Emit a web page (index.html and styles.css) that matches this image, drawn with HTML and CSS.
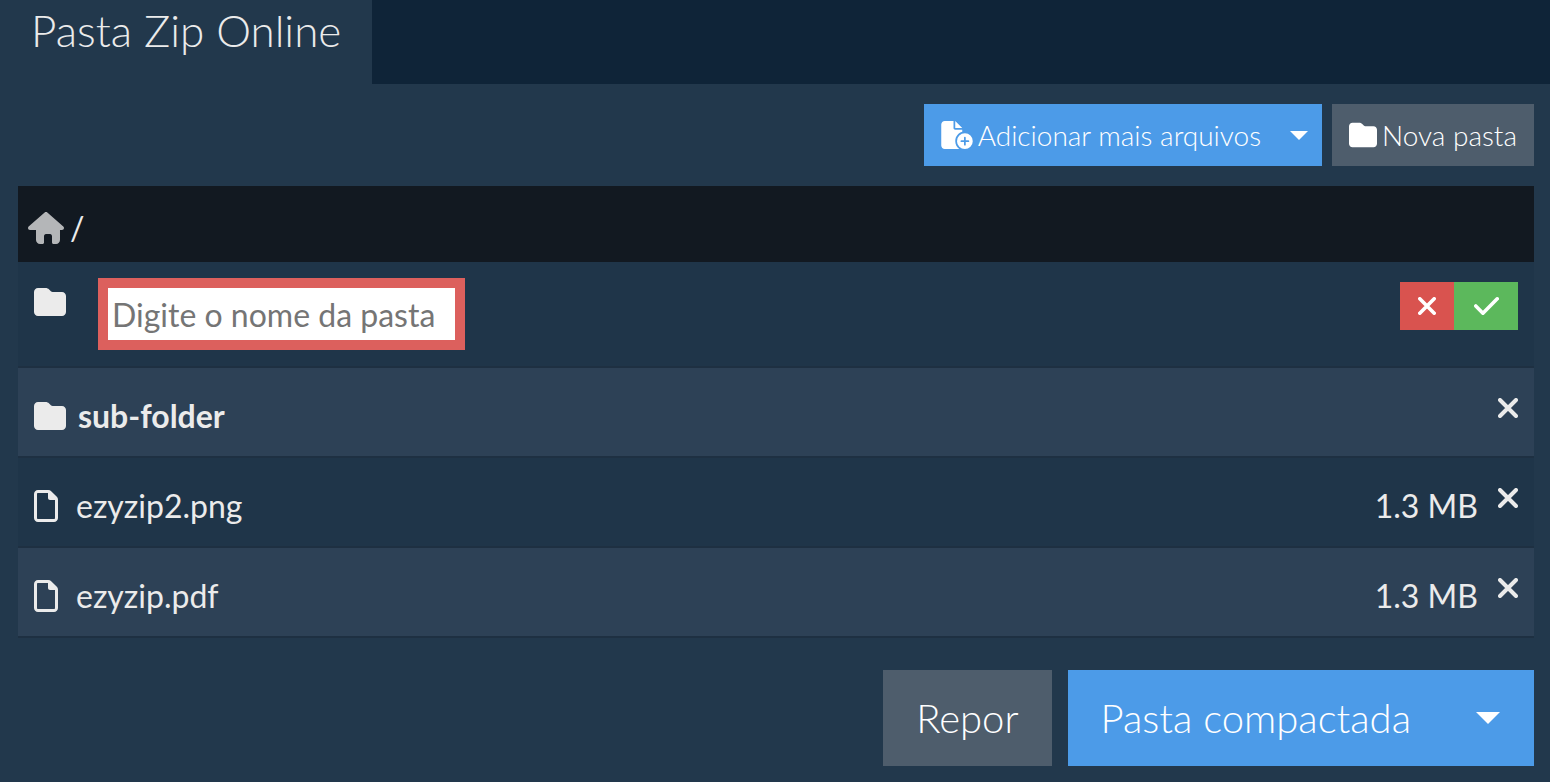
FILE: index.html
```html
<!DOCTYPE html>
<html lang="pt-BR">
  <head>
    <meta charset="UTF-8" />
    <meta name="viewport" content="width=device-width, initial-scale=1.0" />
    <title>Pasta Zip Online</title>
    <link rel="stylesheet" href="styles.css">
  </head>
  <body>
    <!-- Ícones compartilhados -->
    <svg class="sprite" aria-hidden="true">
      <symbol id="icon-folder" viewBox="0 0 512 512">
        <path d="M64 480H448c35.300 0 64-28.700 64-64V160c0-35.300-28.700-64-64-64H298c-11 0-20-4-28-12L242 56c-15-15-35-24-57-24H64C28.700 32 0 60.700 0 96V416c0 35.300 28.700 64 64 64z" />
      </symbol>
      <symbol id="icon-file" viewBox="0 0 384 512">
        <path d="M336 448V160H256c-17.700 0-32-14.300-32-32V48H64c-8.800 0-16 7.200-16 16V448c0 8.800 7.200 16 16 16H320c8.800 0 16-7.200 16-16zM64 0H229.500c17 0 33.300 6.700 45.300 18.700l90.500 90.500c12 12 18.700 28.300 18.700 45.300V448c0 35.300-28.700 64-64 64H64c-35.300 0-64-28.700-64-64V64C0 28.700 28.700 0 64 0z" />
      </symbol>
      <symbol id="icon-close" viewBox="0 0 320 320">
        <path d="M32 32L288 288M288 32L32 288" fill="none" stroke="currentColor" stroke-width="64" stroke-linecap="round" />
      </symbol>
      <symbol id="icon-check" viewBox="0 0 448 320">
        <path d="M32 160L160 288L416 32" fill="none" stroke="currentColor" stroke-width="64" stroke-linecap="round" stroke-linejoin="round" />
      </symbol>
    </svg>

    <div class="tabs">
      <h1 class="tab">Pasta Zip Online</h1>
    </div>

    <div class="container">
      <div class="toolbar">
        <div class="btn-group">
          <button type="button" class="btn btn-primary">
            <svg class="icon-add" viewBox="0 0 576 512" aria-hidden="true">
              <path d="M0 64C0 28.700 28.700 0 64 0H224V128c0 17.700 14.300 32 32 32H384v38.600C310.100 219.500 256 287.400 256 368c0 59.100 29.100 111.300 73.700 143.300c-3.200 .5-6.400 .7-9.700 .7H64c-35.300 0-64-28.700-64-64V64zM384 128H256V0L384 128z" />
              <path fill-rule="evenodd" d="M432 224a144 144 0 1 1 0 288a144 144 0 1 1 0-288zM448 304a16 16 0 0 0-32 0v48H368a16 16 0 0 0 0 32h48v48a16 16 0 0 0 32 0V384h48a16 16 0 0 0 0-32H448V304z" />
            </svg>
            Adicionar mais arquivos
          </button>
          <button type="button" class="btn btn-primary btn-toggle" aria-label="Mais opções">
            <span class="caret"></span>
          </button>
        </div>
        <button type="button" class="btn btn-secondary">
          <svg class="icon-btn" aria-hidden="true"><use href="#icon-folder" /></svg>
          Nova pasta
        </button>
      </div>

      <nav class="path">
        <a href="#" class="home" aria-label="Início">
          <svg class="icon-home" viewBox="0 0 576 512" aria-hidden="true">
            <path d="M575.800 255.500c0 18-15 32.100-32 32.100h-32V448c0 35-28 64-62 64h-42c-13 0-23.700-10-23.700-24V392c0-22-10-40-32-40h-64c-22 0-32 18-32 40v96c0 14-11 24-24 24h-40c-35 0-64-29-64-64V287.600H32c-18 0-32-14-32-32.100c0-9 3-17 10-24L266.400 8c7-7 15-8 22-8s15 2 21 7L564.800 231.500c8 7 12 15 11 24z" />
          </svg>
        </a>
        <span>/</span>
      </nav>

      <table class="files">
        <tbody>
          <tr>
            <td class="name name-edit">
              <div class="new-folder">
                <svg class="icon-folder" aria-hidden="true"><use href="#icon-folder" /></svg>
                <input type="text" class="folder-input" placeholder="Digite o nome da pasta" aria-label="Nome da pasta" />
              </div>
            </td>
            <td class="actions" colspan="2">
              <div class="confirm">
                <button type="button" class="btn-cancel" aria-label="Cancelar">
                  <svg class="icon-cancel" aria-hidden="true"><use href="#icon-close" /></svg>
                </button>
                <button type="button" class="btn-ok" aria-label="Confirmar">
                  <svg class="icon-check" aria-hidden="true"><use href="#icon-check" /></svg>
                </button>
              </div>
            </td>
          </tr>
          <tr>
            <td class="name">
              <div class="entry folder">
                <svg class="icon-folder" aria-hidden="true"><use href="#icon-folder" /></svg>
                sub-folder
              </div>
            </td>
            <td class="size"></td>
            <td class="actions">
              <button type="button" class="btn-delete" aria-label="Excluir sub-folder">
                <svg class="icon-close" aria-hidden="true"><use href="#icon-close" /></svg>
              </button>
            </td>
          </tr>
          <tr>
            <td class="name">
              <div class="entry">
                <svg class="icon-file" aria-hidden="true"><use href="#icon-file" /></svg>
                ezyzip2.png
              </div>
            </td>
            <td class="size">1.3 MB</td>
            <td class="actions">
              <button type="button" class="btn-delete" aria-label="Excluir ezyzip2.png">
                <svg class="icon-close" aria-hidden="true"><use href="#icon-close" /></svg>
              </button>
            </td>
          </tr>
          <tr>
            <td class="name">
              <div class="entry">
                <svg class="icon-file" aria-hidden="true"><use href="#icon-file" /></svg>
                ezyzip.pdf
              </div>
            </td>
            <td class="size">1.3 MB</td>
            <td class="actions">
              <button type="button" class="btn-delete" aria-label="Excluir ezyzip.pdf">
                <svg class="icon-close" aria-hidden="true"><use href="#icon-close" /></svg>
              </button>
            </td>
          </tr>
        </tbody>
      </table>

      <div class="footer">
        <button type="button" class="btn btn-secondary btn-lg">Repor</button>
        <div class="btn-group">
          <button type="button" class="btn btn-primary btn-lg">Pasta compactada</button>
          <button type="button" class="btn btn-primary btn-toggle-lg" aria-label="Outros formatos">
            <span class="caret caret-lg"></span>
          </button>
        </div>
      </div>
    </div>
  </body>
</html>
```

FILE: styles.css
```css
* {
  margin: 0;
  padding: 0;
  box-sizing: border-box;
  font-family: Lato, 'Liberation Sans', sans-serif;
}

body {
  background-color: #22384c;
  color: #ebebeb;
  font-size: 32px;
}

svg {
  display: block;
  flex-shrink: 0;
  fill: currentColor;
}

.sprite {
  display: none;
}

.tabs {
  display: flex;
  background-color: #0f2438;
}

.tab {
  padding: 0 31px 24px;
  background-color: #22384c;
  font-size: 44px;
  font-weight: 300;
  line-height: 60px;
}

.container {
  padding: 20px 16px 16px 18px;
}

.toolbar {
  display: flex;
  justify-content: flex-end;
  gap: 10px;
  margin-bottom: 20px;
}

.btn-group {
  display: flex;
}

.btn {
  display: flex;
  align-items: center;
  gap: 5px;
  height: 62px;
  padding: 0 17px;
  border: none;
  color: white;
  font-size: 28px;
  font-weight: 300;
  cursor: pointer;
}

.btn-primary {
  background-color: #4c9be8;
}

.btn-secondary {
  background-color: #4e5d6c;
}

.btn-toggle {
  padding: 0 14px 0 12px;
}

.btn-lg {
  height: 96px;
  padding: 0 33px;
  font-size: 40px;
}

.btn-toggle-lg {
  height: 96px;
  padding: 0 34px 0 32px;
}

.caret {
  border-top: 9px solid white;
  border-left: 9px solid transparent;
  border-right: 9px solid transparent;
}

.caret-lg {
  border-top-width: 12px;
  border-left-width: 12px;
  border-right-width: 12px;
}

.icon-add {
  width: 32px;
  height: 28px;
}

.icon-btn {
  width: 28px;
  height: 28px;
}

.path {
  display: flex;
  align-items: center;
  gap: 6px;
  padding: 18px 10px 10px;
  background-color: #121921;
  line-height: 48px;
}

.home {
  color: #ebebeb;
  opacity: 0.75;
}

.icon-home {
  width: 36px;
  height: 32px;
}

.files {
  width: 100%;
  border-spacing: 0;
}

.files tr {
  background-color: #1f3549;
}

.files tr:nth-child(even) {
  background-color: #2d4156;
}

.files td {
  padding: 20px 16px 12px;
  border-bottom: 2px solid #1e3042;
  line-height: 56px;
}

.files .name-edit {
  padding: 16px;
}

.files .size {
  width: 120px;
  padding-left: 0;
  padding-right: 0;
  text-align: right;
  white-space: nowrap;
}

.files .actions {
  padding-left: 0;
  vertical-align: top;
}

.files .size + .actions {
  width: 56px;
}

.new-folder {
  display: flex;
  align-items: flex-start;
  gap: 32px;
}

.new-folder .icon-folder {
  margin-top: 8px;
}

.folder-input {
  width: 367px;
  height: 72px;
  padding: 0 4px;
  border: 10px solid #dc605d;
  background-color: white;
  color: #333333;
  font-size: 32px;
}

.folder-input::placeholder {
  color: #757575;
}

.confirm {
  display: flex;
  justify-content: flex-end;
}

.confirm button {
  display: flex;
  align-items: center;
  justify-content: center;
  width: 54px;
  height: 48px;
  border: none;
  color: white;
  cursor: pointer;
}

.confirm .btn-cancel {
  background-color: #d9534f;
}

.confirm .btn-ok {
  width: 64px;
  background-color: #5cb85c;
}

.btn-delete {
  display: flex;
  align-items: center;
  height: 40px;
  margin-left: auto;
  border: none;
  background: none;
  color: #ebebeb;
  cursor: pointer;
}

.entry {
  display: flex;
  align-items: center;
  gap: 18px;
}

.folder {
  gap: 12px;
  font-weight: bold;
}

.icon-folder {
  width: 32px;
  height: 32px;
}

.icon-file {
  width: 24px;
  height: 32px;
}

.icon-close {
  width: 20px;
  height: 20px;
}

.icon-cancel {
  width: 18px;
  height: 18px;
}

.icon-check {
  width: 25px;
  height: 18px;
}

.footer {
  display: flex;
  justify-content: flex-end;
  gap: 16px;
  margin-top: 32px;
}
```
